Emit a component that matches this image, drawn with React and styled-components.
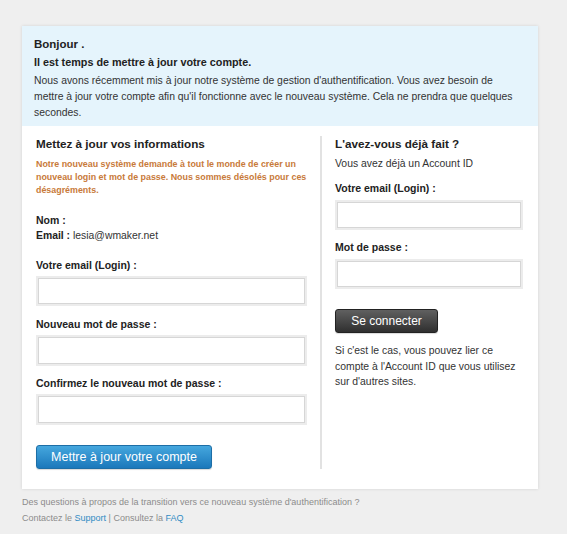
import React from 'react'
import styled, { createGlobalStyle } from 'styled-components'

const Global = createGlobalStyle`
  body {
    margin: 0;
    background: #efefef;
    font-family: "Liberation Sans", Arial, sans-serif;
    color: #333;
  }
`

const Page = styled.div`
  padding: 26px 29px 0 22px;
`

const Card = styled.div`
  width: 516px;
  background: #fff;
  box-shadow: 0 0 3px rgba(0, 0, 0, 0.12);
`

const Intro = styled.div`
  background: #e5f4fc;
  padding: 10px 14px 5px 12px;
`

const Hello = styled.div`
  font-size: 11.5px;
  font-weight: bold;
  line-height: 16px;
  color: #222;
`

const Lead = styled.div`
  font-size: 10.8px;
  font-weight: bold;
  line-height: 16px;
  margin-top: 2px;
  color: #222;
`

const IntroText = styled.p`
  margin: 3px 0 0;
  font-size: 10.4px;
  line-height: 16px;
  color: #333;
  white-space: nowrap;
`

const Body = styled.div`
  display: flex;
  padding: 10px 16px 20px 14px;
`

const Column = styled.div`
  display: flex;
  flex-direction: column;
  align-items: flex-start;
  flex: ${p => (p.$divided ? '1 1 auto' : `0 0 ${p.$width}px`)};
  min-width: 0;
  ${p => p.$divided && `
    border-left: 2px solid #e2e2e2;
    padding-left: 13px;
  `}
`

const Title = styled.div`
  font-size: 11.7px;
  font-weight: bold;
  line-height: 16px;
  color: #222;
`

const Warning = styled.div`
  margin-top: 6px;
  font-size: 8.9px;
  font-weight: bold;
  line-height: 13px;
  color: #c87a3a;
  white-space: nowrap;
`

const Text = styled.div`
  font-size: 10.4px;
  line-height: ${p => p.$lh || 15}px;
  margin-top: ${p => p.$mt || 0}px;
  color: #333;
  b {
    color: #222;
  }
`

const Label = styled.div`
  font-size: 10.5px;
  font-weight: bold;
  line-height: 15px;
  color: #222;
  margin-top: ${p => p.$mt || 10}px;
`

const Field = styled.div`
  margin-top: ${p => p.$mt || 4}px;
  width: ${p => p.$width}px;
  height: ${p => p.$height || 30}px;
  box-sizing: border-box;
  border: 2px solid #ececec;
  display: flex;
`

const Input = styled.input`
  flex: 1;
  min-width: 0;
  box-sizing: border-box;
  border: 1px solid #d6d6d6;
  background: #fff;
  outline: none;
  margin: 0;
  padding: 0 4px;
`

const Button = styled.button`
  margin-top: ${p => p.$mt || 20}px;
  width: ${p => p.$width}px;
  height: 24px;
  border-radius: 3px;
  font-family: "Liberation Sans", Arial, sans-serif;
  font-size: ${p => (p.$dark ? 12 : 12.5)}px;
  color: #fff;
  padding: 0;
  cursor: pointer;
  border: 1px solid ${p => (p.$dark ? '#222' : '#1d6ea6')};
  background: ${p =>
    p.$dark
      ? 'linear-gradient(#606060, #2f2f2f)'
      : 'linear-gradient(#45a7de, #1b78bb)'};
  box-shadow: 0 1px 1px rgba(0, 0, 0, 0.15);
`

const Footer = styled.div`
  margin-top: 5px;
  font-size: 9px;
  line-height: 16px;
  color: #8c8c8c;
  a {
    color: #2f8cc4;
    text-decoration: none;
  }
`

export default function App() {
  return (
    <Page>
      <Global />
      <Card>
        <Intro>
          <Hello>Bonjour .</Hello>
          <Lead>Il est temps de mettre à jour votre compte.</Lead>
          <IntroText>
            Nous avons récemment mis à jour notre système de gestion d'authentification. Vous avez besoin de
            <br />
            mettre à jour votre compte afin qu'il fonctionne avec le nouveau système. Cela ne prendra que quelques
            <br />
            secondes.
          </IntroText>
        </Intro>
        <Body>
          <Column $width={284}>
            <Title>Mettez à jour vos informations</Title>
            <Warning>
              Notre nouveau système demande à tout le monde de créer un
              <br />
              nouveau login et mot de passe. Nous sommes désolés pour ces
              <br />
              désagréments.
            </Warning>
            <Label $mt={16}>Nom :</Label>
            <Text>
              <b>Email :</b> lesia@wmaker.net
            </Text>
            <Label $mt={15}>Votre email (Login) :</Label>
            <Field $width={271} $mt={3}>
              <Input type="text" />
            </Field>
            <Label $mt={11}>Nouveau mot de passe :</Label>
            <Field $width={271} $height={31} $mt={3}>
              <Input type="password" />
            </Field>
            <Label>Confirmez le nouveau mot de passe :</Label>
            <Field $width={271} $height={31} $mt={3}>
              <Input type="password" />
            </Field>
            <Button $width={176} $mt={20}>Mettre à jour votre compte</Button>
          </Column>
          <Column $divided>
            <Title>L'avez-vous déjà fait ?</Title>
            <Text $mt={4}>Vous avez déjà un Account ID</Text>
            <Label $mt={10}>Votre email (Login) :</Label>
            <Field $width={188}>
              <Input type="text" />
            </Field>
            <Label $mt={10}>Mot de passe :</Label>
            <Field $width={188}>
              <Input type="password" />
            </Field>
            <Button $width={103} $dark $mt={20}>Se connecter</Button>
            <Text $mt={10} $lh={15.5}>
              Si c'est le cas, vous pouvez lier ce
              <br />
              compte à l'Account ID que vous utilisez
              <br />
              sur d'autres sites.
            </Text>
          </Column>
        </Body>
      </Card>
      <Footer>
        Des questions à propos de la transition vers ce nouveau système d'authentification ?
        <br />
        Contactez le <a href="#">Support</a> | Consultez la <a href="#">FAQ</a>
      </Footer>
    </Page>
  )
}
